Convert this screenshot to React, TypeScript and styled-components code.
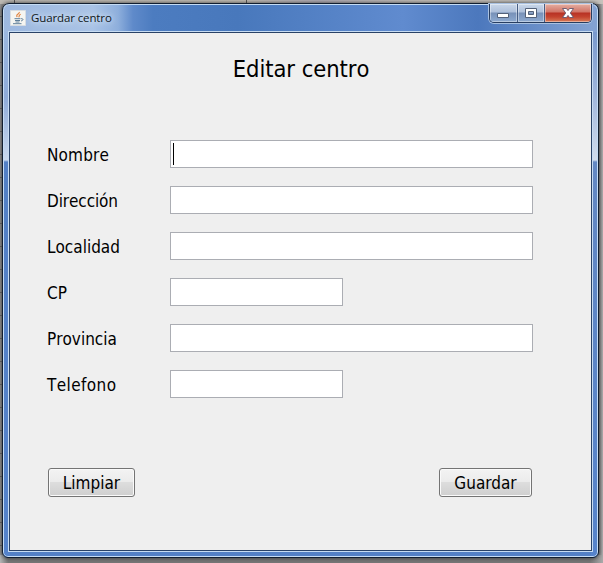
import React from "react";
import styled, { createGlobalStyle } from "styled-components";

const GlobalStyle = createGlobalStyle`
  * { box-sizing: border-box; }
  body { margin: 0; overflow: hidden; }
`;

const Desktop = styled.main`
  width: 603px;
  height: 563px;
  padding: 3px 4px 5px 2px;
  background:
    linear-gradient(#555, #555) 14px 0 / 1px 3px no-repeat,
    linear-gradient(#555, #555) 246px 0 / 1px 3px no-repeat,
    linear-gradient(90deg, #bcb9b3, #c5c0b7 40%, #b2aeb7 53%, #c6c2bc 70%) 0 0 / 100% 4px no-repeat,
    linear-gradient(90deg, #b5b5b5, #777 8px, #777 590px, #aaa) 0 100% / 100% 8px no-repeat,
    linear-gradient(#666 0 1px, transparent 1px) 0 16px / 2px 23px repeat-y,
    linear-gradient(90deg, #999 0, #888 2px, #777 598px, #b0afb0 603px);
`;

const Window = styled.section`
  width: 597px;
  height: 555px;
  display: flex;
  flex-direction: column;
  border: 1px solid #111e30;
  border-radius: 7px 7px 6px 6px;
  padding: 0 6px 6px;
  box-shadow: inset 0 0 0 1px #c5dcf4, 0 0 4px #333;
  background:
    linear-gradient(180deg, #9bb7df 0, #8eabd8 65px, #c9d9ee 128px, #5380c5 130px, #5583cb 100%) 0 28px / 7px 100% no-repeat,
    linear-gradient(180deg, #7898cc 0, #a1b7dc 65px, #d1dded 128px, #6388c3 130px, #5583cb 100%) 100% 28px / 7px 100% no-repeat,
    linear-gradient(#5380c5, #5380c5) 0 100% / 100% 8px no-repeat,
    linear-gradient(90deg, #9db8df 0, #a9c3e6 90px, #8eafdc 115px, #5f8aca 130px, #4c7cc0 150px, #4878bc 235px, #608bcf 400px, #4c78bd 475px, #83a2d2 590px);
`;

const TitleBar = styled.header`
  display: flex;
  align-items: flex-start;
  flex: 0 0 28px;
  padding-left: 1px;
`;

const AppIcon = styled.svg`
  width: 16px;
  height: 16px;
  margin-top: 6px;
`;

const Caption = styled.span`
  margin: 7px 0 0 5px;
  color: #101820;
  font: 11.5px/14px "Open Sans", sans-serif;
  letter-spacing: -0.12px;
  white-space: nowrap;
  text-shadow: 0 0 5px #dceaff, 0 0 8px #dceaff;
`;

const WindowControls = styled.div`
  display: flex;
  width: 103px;
  height: 19px;
  margin-left: auto;
  border: 1px solid #273d60;
  border-top: 0;
  border-radius: 0 0 5px 5px;
  overflow: hidden;
  box-shadow: 0 0 0 1px #a9c1e1;
`;

const Control = styled.button<{ $close?: boolean }>`
  display: grid;
  place-items: center;
  flex: 0 0 ${({ $close }) => ($close ? 46 : 27.5)}px;
  height: 18px;
  padding: 0;
  border: 0;
  border-right: ${({ $close }) => ($close ? "0" : "1px solid #465d83")};
  background: ${({ $close }) => $close
    ? "linear-gradient(#e5afa2 0, #d17466 8px, #b83224 9px, #c4442f 13px, #d97d59 18px)"
    : "linear-gradient(#c9d7e9 0, #adbfda 8px, #7891b8 9px, #8eaad0 18px)"};
  box-shadow: inset 0 0 0 1px #ffffff66;
  svg { width: 16px; height: 14px; display: block; }
`;

const Content = styled.div`
  height: 519px;
  border: 1px solid #294267;
  background: #efefef;
  color: #000;
  box-shadow: 0 0 0 1px #c7dcf2;
  padding: 0 58px 0 37px;
  font-family: "DejaVu Sans Condensed", "DejaVu Sans", sans-serif;
  font-stretch: condensed;
  font-kerning: none;
`;

const Heading = styled.h1`
  margin: 0;
  padding-top: 19px;
  height: 107px;
  font-size: 23.5px;
  line-height: 34px;
  font-weight: 400;
  text-align: center;
  letter-spacing: -0.05px;
  text-indent: 22px;
`;

const Fields = styled.div`
  display: grid;
  row-gap: 18px;
`;

const Field = styled.label`
  display: grid;
  grid-template-columns: 123px 1fr;
  height: 28px;
`;

const FieldName = styled.span<{ $tracking?: number }>`
  font-size: 17px;
  line-height: 30px;
  letter-spacing: ${({ $tracking = 0 }) => $tracking}px;
`;

const Input = styled.div<{ $short?: boolean }>`
  width: ${({ $short }) => ($short ? 173 : 363)}px;
  height: 28px;
  padding: 2px;
  border: 1px solid #abadb3;
  background: #fff;
`;

const Caret = styled.span`
  display: block;
  width: 1px;
  height: 22px;
  background: #000;
`;

const Actions = styled.div`
  display: flex;
  justify-content: space-between;
  margin-top: 70px;
  padding: 0 1px;
`;

const ActionButton = styled.button<{ $width: number }>`
  width: ${({ $width }) => $width}px;
  height: 29px;
  border: 1px solid #747474;
  border-radius: 3px;
  padding: 1px 0 0;
  background: linear-gradient(#f3f3f3 0, #ebebeb 48%, #dddddd 50%, #cfcfcf 100%);
  box-shadow: inset 0 0 0 1px #fafafa;
  color: #000;
  font-family: inherit;
  font-stretch: inherit;
  font-size: 17px;
  line-height: 26px;
`;

const fields = [
  { label: "Nombre", active: true, tracking: 0.15 },
  { label: "Dirección", tracking: -0.1 },
  { label: "Localidad" },
  { label: "CP", short: true },
  { label: "Provincia" },
  { label: "Telefono", short: true, tracking: 0.4 },
];

function JavaIcon() {
  return (
    <AppIcon viewBox="0 0 16 16">
      <path d="M.5.5h15v15H.5z" fill="#f5f5f1" stroke="#d8dde2" />
      <path d="M9.3 2C10 4 5.2 4.3 7.2 7M10.7 4.2C8 5.2 10 6.2 8.6 7.2" fill="none" stroke="#e18440" strokeWidth="1.2" />
      <path d="M4.5 8.7h6M5 10.5h5M5.5 12h4M3 13.7h8.5M11 8.7c3-.4 2.2 2.1 0 2.2" fill="none" stroke="#5f7f99" strokeWidth="1" />
    </AppIcon>
  );
}

export default function App() {
  return (
    <>
      <GlobalStyle />
      <Desktop>
        <Window>
          <TitleBar>
            <JavaIcon />
            <Caption>Guardar centro</Caption>
            <WindowControls>
              <Control aria-label="Minimizar">
                <svg viewBox="0 0 16 14"><path d="M2.5 7.5h11v4h-11z" fill="#fff" stroke="#536179" /></svg>
              </Control>
              <Control aria-label="Maximizar">
                <svg viewBox="0 0 16 14"><path fillRule="evenodd" d="M2.5 2.5h11v9h-11zm3 3v3h5v-3z" fill="#fff" stroke="#536179" /></svg>
              </Control>
              <Control $close aria-label="Cerrar">
                <svg viewBox="0 0 16 14"><path d="M2.5 2.5h4L8 4.6l1.5-2.1h4L10.3 7l3.2 4.5h-4L8 9.4l-1.5 2.1h-4L5.7 7z" fill="#fff" stroke="#65556a" strokeWidth=".9" /></svg>
              </Control>
            </WindowControls>
          </TitleBar>
          <Content>
            <Heading>Editar centro</Heading>
            <Fields>
              {fields.map((field) => (
                <Field key={field.label}>
                  <FieldName $tracking={field.tracking}>{field.label}</FieldName>
                  <Input $short={field.short}>{field.active && <Caret />}</Input>
                </Field>
              ))}
            </Fields>
            <Actions>
              <ActionButton $width={87}>Limpiar</ActionButton>
              <ActionButton $width={93}>Guardar</ActionButton>
            </Actions>
          </Content>
        </Window>
      </Desktop>
    </>
  );
}
